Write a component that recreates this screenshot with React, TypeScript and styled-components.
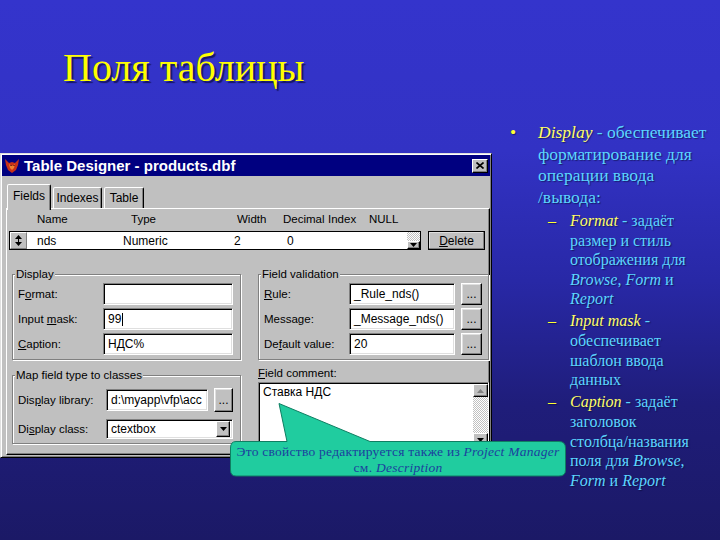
import React from 'react';
import styled, { createGlobalStyle } from 'styled-components';

const Global = createGlobalStyle`
  html, body { margin: 0; padding: 0; }
  body { width: 720px; height: 540px; overflow: hidden; background: #1b1966; }
`;

const Slide = styled.div`
  position: relative;
  width: 720px;
  height: 540px;
  overflow: hidden;
  background: linear-gradient(180deg, #3434cc 0%, #3232c4 28%, #2828a6 52%, #1f1d7a 75%, #1b1966 100%);
  font-family: "Liberation Serif", "Times New Roman", serif;
`;

const Title = styled.h1`
  margin: 0;
  height: 120px;
  box-sizing: border-box;
  padding: 48px 0 0 63px;
  font: 400 40px/1 "Liberation Serif", "Times New Roman", serif;
  color: #ffff00;
  text-shadow: 2px 2px 1px rgba(12, 12, 70, 0.75);
`;

const Body = styled.div`
  display: flex;
  align-items: flex-start;
`;

/* ---------- dialog ---------- */
const Dialog = styled.section`
  margin-top: 33px;
  width: 492px;
  height: 305px;
  flex: none;
  box-sizing: border-box;
  background: #c0c0c0;
  border: 1px solid;
  border-color: #dfdfdf #000 #000 #dfdfdf;
  box-shadow: inset 1px 1px 0 #fff, inset -1px -1px 0 #808080;
  padding: 1px;
  display: flex;
  flex-direction: column;
  font: 11px/14px "Liberation Sans", Arial, sans-serif;
  color: #000;
`;

const TitleBar = styled.header`
  height: 21px;
  flex: none;
  background: #000080;
  display: flex;
  align-items: center;
  gap: 3px;
  padding: 0 2px 0 2px;
`;

const TitleText = styled.span`
  flex: 1;
  color: #fff;
  font: 700 15px/1 "Liberation Sans", Arial, sans-serif;
`;

const CloseBtn = styled.span`
  width: 16px;
  height: 14px;
  box-sizing: border-box;
  background: #c0c0c0;
  border: 1px solid;
  border-color: #fff #000 #000 #fff;
  box-shadow: inset -1px -1px 0 #808080;
  display: flex;
  align-items: center;
  justify-content: center;
`;

const DialogBody = styled.div`
  flex: 1;
  display: flex;
  flex-direction: column;
  padding: 8px 0 1px 4px;
  min-height: 0;
`;

const Tabs = styled.div`
  height: 24px;
  flex: none;
  display: flex;
  align-items: flex-end;
  gap: 2px;
  padding-left: 1px;
`;

const Tab = styled.div<{ $active?: boolean; $w: number }>`
  position: relative;
  width: ${(p) => p.$w}px;
  height: ${(p) => (p.$active ? 26 : 21)}px;
  margin-bottom: ${(p) => (p.$active ? -2 : 0)}px;
  z-index: ${(p) => (p.$active ? 2 : 0)};
  box-sizing: border-box;
  background: #c0c0c0;
  border: 1px solid;
  border-bottom: none;
  border-color: #fff #000 transparent #fff;
  box-shadow: inset -1px 0 0 #808080;
  border-radius: 2px 2px 0 0;
  font-size: 12px;
  display: flex;
  justify-content: center;
  padding-top: ${(p) => (p.$active ? 4 : 3)}px;
`;

const Panel = styled.div`
  flex: 1;
  box-sizing: border-box;
  border: 1px solid;
  border-color: #fff #000 #000 #fff;
  box-shadow: inset -1px -1px 0 #808080;
  padding: 3px 0 0 0;
  display: flex;
  flex-direction: column;
`;

const GridHeader = styled.div`
  height: 15px;
  display: grid;
  grid-template-columns: 94px 106px 46px 45px 41px auto;
  padding-left: 30px;
  font-size: 11.5px;
`;

const DataRow = styled.div`
  margin-top: 4px;
  display: flex;
  align-items: stretch;
  height: 19px;
`;

const RowBox = styled.div`
  margin-left: 2px;
  width: 412px;
  box-sizing: border-box;
  border: 1px solid #000;
  background: #fff;
  display: flex;
`;

const Spinner = styled.div`
  width: 17px;
  flex: none;
  box-sizing: border-box;
  background: #c0c0c0;
  border: 1px solid;
  border-color: #fff #808080 #808080 #fff;
  display: flex;
  align-items: center;
  justify-content: center;
`;

const Cells = styled.div`
  flex: 1;
  display: grid;
  grid-template-columns: 86px 111px 53px auto;
  align-items: center;
  padding-left: 10px;
  font-size: 12px;
`;

const VScroll = styled.div`
  width: 13px;
  flex: none;
  display: flex;
  flex-direction: column;
  background: repeating-conic-gradient(#c0c0c0 0 25%, #fff 0 50%) 0 0 / 2px 2px;
`;

const ScrollBtn = styled.div<{ $h: number }>`
  height: ${(p) => p.$h}px;
  box-sizing: border-box;
  background: #c0c0c0;
  border: 1px solid;
  border-color: #fff #000 #000 #fff;
  box-shadow: inset -1px -1px 0 #808080;
  display: flex;
  align-items: center;
  justify-content: center;
`;

const ScrollFill = styled.div`
  flex: 1;
`;

const Button = styled.div<{ $w: number; $h?: number }>`
  width: ${(p) => p.$w}px;
  height: ${(p) => p.$h ?? 22}px;
  flex: none;
  box-sizing: border-box;
  background: #c0c0c0;
  border: 1px solid;
  border-color: #fff #000 #000 #fff;
  box-shadow: inset -1px -1px 0 #808080, inset 1px 1px 0 #dfdfdf;
  display: flex;
  align-items: center;
  justify-content: center;
  font-size: 12px;
`;

const DeleteBtn = styled(Button)`
  margin-left: 7px;
  outline: 1px solid #000;
  outline-offset: -1px;
`;

const Groups = styled.div`
  margin-top: 17px;
  display: flex;
  gap: 17px;
  padding-left: 5px;
`;

const Column = styled.div<{ $w: number }>`
  width: ${(p) => p.$w}px;
  display: flex;
  flex-direction: column;
`;

const Group = styled.fieldset<{ $cols: string; $pt: number; $gap: number; $mt?: number }>`
  margin: ${(p) => p.$mt ?? 0}px 0 0 0;
  min-width: 0;
  box-sizing: border-box;
  padding: ${(p) => p.$pt}px 7px 4px 5px;
  border: 1px solid #808080;
  box-shadow: 1px 1px 0 #fff, inset 1px 1px 0 #fff;
  display: grid;
  grid-template-columns: ${(p) => p.$cols};
  row-gap: ${(p) => p.$gap}px;
  align-items: center;
`;

const Legend = styled.legend`
  padding: 0 1px;
  margin-left: -3px;
  font-size: 11.5px;
  line-height: 14px;
  background: #c0c0c0;
  position: relative;
`;

const Label = styled.label`
  font-size: 11.5px;
  white-space: nowrap;
`;

const Control = styled.div`
  display: flex;
  gap: 6px;
  align-items: center;
`;

const Field = styled.div<{ $w: number; $h?: number }>`
  width: ${(p) => p.$w}px;
  height: ${(p) => p.$h ?? 22}px;
  flex: none;
  box-sizing: border-box;
  background: #fff;
  border: 1px solid;
  border-color: #808080 #fff #fff #808080;
  box-shadow: inset 1px 1px 0 #000, inset -1px -1px 0 #dfdfdf;
  padding: 0 4px;
  display: flex;
  align-items: center;
  font-size: 12px;
  white-space: nowrap;
  overflow: hidden;
`;

const Combo = styled(Field)`
  padding-right: 2px;
  justify-content: space-between;
`;

const ComboBtn = styled(ScrollBtn)`
  width: 14px;
`;

const Caret = styled.span`
  display: inline-block;
  width: 1px;
  height: 13px;
  background: #000;
  margin-left: 1px;
`;

const CommentLabel = styled.div`
  margin-top: 6px;
  height: 14px;
  font-size: 11.5px;
  padding-left: 0;
`;

const CommentBox = styled.div`
  margin-top: 2px;
  height: 66px;
  box-sizing: border-box;
  background: #fff;
  border: 1px solid;
  border-color: #808080 #fff #fff #808080;
  box-shadow: inset 1px 1px 0 #000;
  display: flex;
  font-size: 12px;
`;

const CommentText = styled.div`
  flex: 1;
  padding: 2px 4px;
`;

const CommentScroll = styled(VScroll)`
  width: 15px;
  margin: 1px 0 1px 0;
`;

/* ---------- notes ---------- */
const Notes = styled.ul`
  list-style: none;
  margin: 0;
  padding: 2px 0 0 18px;
  white-space: nowrap;
  color: #5cd6ff;
  text-shadow: 1px 1px 1px rgba(10, 10, 50, 0.55);
`;

const Item = styled.li`
  display: flex;
  font-size: 17.5px;
  line-height: 21.5px;
`;

const Bullet = styled.span`
  flex: 0 0 28px;
  color: #ffff33;
`;

const SubList = styled.ul`
  list-style: none;
  margin: 3px 0 0 0;
  padding: 0 0 0 10px;
`;

const SubItem = styled.li`
  display: flex;
  font-size: 16px;
  line-height: 19.6px;
  & + & {
    margin-top: 2.5px;
  }
`;

const Dash = styled.span`
  flex: 0 0 22px;
  color: #ffff33;
`;

const Key = styled.em`
  color: #ffff66;
  font-style: italic;
`;

const Term = styled.i``;

/* ---------- callout ---------- */
const Callout = styled.div`
  position: absolute;
  left: 230px;
  top: 403px;
  width: 336px;
  height: 74px;
  z-index: 5;
`;

const CalloutShape = styled.svg`
  position: absolute;
  inset: 0;
`;

const CalloutText = styled.p`
  position: relative;
  margin: 0;
  padding: 41px 2px 0 2px;
  text-align: center;
  font: 13.5px/16px "Liberation Serif", "Times New Roman", serif;
  letter-spacing: 0.25px;
  color: #1c3f9e;
  white-space: nowrap;
`;

const DownArrow = () => (
  <svg width="7" height="4" viewBox="0 0 7 4">
    <path d="M0 0h7L3.5 4z" fill="#000" />
  </svg>
);

const UpArrow = () => (
  <svg width="7" height="4" viewBox="0 0 7 4">
    <path d="M0 4h7L3.5 0z" fill="#808080" />
  </svg>
);

const VfpIcon = () => (
  <svg width="17" height="16" viewBox="0 0 17 16">
    <path d="M1 1l4 4 3-1 3 1 4-4-1 6-2 5-4 3-4-3-2-5z" fill="#c83018" />
    <path d="M5 6l3 2 3-2-1 4-2 2-2-2z" fill="#f08030" />
    <path d="M6.5 7.5h1M9.5 7.5h1" stroke="#300" strokeWidth="1" />
  </svg>
);

const CloseX = () => (
  <svg width="8" height="7" viewBox="0 0 8 7">
    <path d="M0.5 0.5l7 6M7.5 0.5l-7 6" stroke="#000" strokeWidth="1.6" />
  </svg>
);

const SpinIcon = () => (
  <svg width="7" height="11" viewBox="0 0 7 11">
    <path d="M3.5 0L7 4H0z M3.5 11L7 7H0z" fill="#000" />
    <rect x="3" y="3" width="1" height="5" fill="#000" />
  </svg>
);

export default function App() {
  return (
    <>
      <Global />
      <Slide>
        <Title>Поля таблицы</Title>
        <Body>
          <Dialog>
            <TitleBar>
              <VfpIcon />
              <TitleText>Table Designer - products.dbf</TitleText>
              <CloseBtn>
                <CloseX />
              </CloseBtn>
            </TitleBar>
            <DialogBody>
              <Tabs>
                <Tab $active $w={44}>Fields</Tab>
                <Tab $w={49}>Indexes</Tab>
                <Tab $w={40}>Table</Tab>
              </Tabs>
              <Panel>
                <GridHeader>
                  <span>Name</span>
                  <span>Type</span>
                  <span>Width</span>
                  <span>Decimal</span>
                  <span>Index</span>
                  <span>NULL</span>
                </GridHeader>
                <DataRow>
                  <RowBox>
                    <Spinner>
                      <SpinIcon />
                    </Spinner>
                    <Cells>
                      <span>nds</span>
                      <span>Numeric</span>
                      <span>2</span>
                      <span>0</span>
                    </Cells>
                    <VScroll>
                      <ScrollFill />
                      <ScrollBtn $h={8}>
                        <DownArrow />
                      </ScrollBtn>
                    </VScroll>
                  </RowBox>
                  <DeleteBtn $w={57} $h={19}>
                    <span>
                      <u>D</u>elete
                    </span>
                  </DeleteBtn>
                </DataRow>
                <Groups>
                  <Column $w={229}>
                    <Group $cols="85px 130px" $pt={2} $gap={3}>
                      <Legend>Display</Legend>
                      <Label>
                        F<u>o</u>rmat:
                      </Label>
                      <Field $w={130} />
                      <Label>
                        Input <u>m</u>ask:
                      </Label>
                      <Field $w={130}>
                        99
                        <Caret />
                      </Field>
                      <Label>
                        <u>C</u>aption:
                      </Label>
                      <Field $w={130}>НДС%</Field>
                    </Group>
                    <Group $cols="88px 128px" $pt={6} $gap={7} $mt={8}>
                      <Legend>Map field type to classes</Legend>
                      <Label>
                        Dis<u>p</u>lay library:
                      </Label>
                      <Control>
                        <Field $w={102}>d:\myapp\vfp\acc</Field>
                        <Button $w={19} $h={24}>
                          ...
                        </Button>
                      </Control>
                      <Label>
                        Di<u>s</u>play class:
                      </Label>
                      <Combo $w={127} $h={20}>
                        ctextbox
                        <ComboBtn $h={16}>
                          <DownArrow />
                        </ComboBtn>
                      </Combo>
                    </Group>
                  </Column>
                  <Column $w={231}>
                    <Group $cols="85px 132px" $pt={2} $gap={3}>
                      <Legend>Field validation</Legend>
                      <Label>
                        <u>R</u>ule:
                      </Label>
                      <Control>
                        <Field $w={106}>_Rule_nds()</Field>
                        <Button $w={21}>...</Button>
                      </Control>
                      <Label>Message:</Label>
                      <Control>
                        <Field $w={106}>_Message_nds()</Field>
                        <Button $w={21}>...</Button>
                      </Control>
                      <Label>
                        De<u>f</u>ault value:
                      </Label>
                      <Control>
                        <Field $w={106}>20</Field>
                        <Button $w={21}>...</Button>
                      </Control>
                    </Group>
                    <CommentLabel>
                      <u>F</u>ield comment:
                    </CommentLabel>
                    <CommentBox>
                      <CommentText>Ставка НДС</CommentText>
                      <CommentScroll>
                        <ScrollBtn $h={13}>
                          <UpArrow />
                        </ScrollBtn>
                        <ScrollFill />
                        <ScrollBtn $h={13}>
                          <DownArrow />
                        </ScrollBtn>
                      </CommentScroll>
                    </CommentBox>
                  </Column>
                </Groups>
              </Panel>
            </DialogBody>
          </Dialog>
          <Notes>
            <Item>
              <Bullet>•</Bullet>
              <div>
                <Key>Display</Key> - обеспечивает
                <br />
                форматирование для
                <br />
                операции ввода
                <br />
                /вывода:
                <SubList>
                  <SubItem>
                    <Dash>–</Dash>
                    <div>
                      <Key>Format</Key> - задаёт
                      <br />
                      размер и стиль
                      <br />
                      отображения для
                      <br />
                      <Term>Browse</Term>, <Term>Form</Term> и
                      <br />
                      <Term>Report</Term>
                    </div>
                  </SubItem>
                  <SubItem>
                    <Dash>–</Dash>
                    <div>
                      <Key>Input mask</Key> -
                      <br />
                      обеспечивает
                      <br />
                      шаблон ввода
                      <br />
                      данных
                    </div>
                  </SubItem>
                  <SubItem>
                    <Dash>–</Dash>
                    <div>
                      <Key>Caption</Key> - задаёт
                      <br />
                      заголовок
                      <br />
                      столбца/названия
                      <br />
                      поля для <Term>Browse</Term>,
                      <br />
                      <Term>Form</Term> и <Term>Report</Term>
                    </div>
                  </SubItem>
                </SubList>
              </div>
            </Item>
          </Notes>
        </Body>
        <Callout>
          <CalloutShape width="336" height="74" viewBox="0 0 336 74">
            <path
              d="M6 38.5 L57 38.5 L49 0.5 L140 38.5 L329 38.5 Q335.5 38.5 335.5 45 L335.5 67 Q335.5 73 329 73 L6 73 Q0.5 73 0.5 67 L0.5 45 Q0.5 38.5 6 38.5 Z"
              fill="#20cc9f"
              stroke="#0f7e62"
              strokeWidth="1"
            />
          </CalloutShape>
          <CalloutText>
            Это свойство редактируется также из <Term>Project Manager</Term>
            <br />
            см. <Term>Description</Term>
          </CalloutText>
        </Callout>
      </Slide>
    </>
  );
}
